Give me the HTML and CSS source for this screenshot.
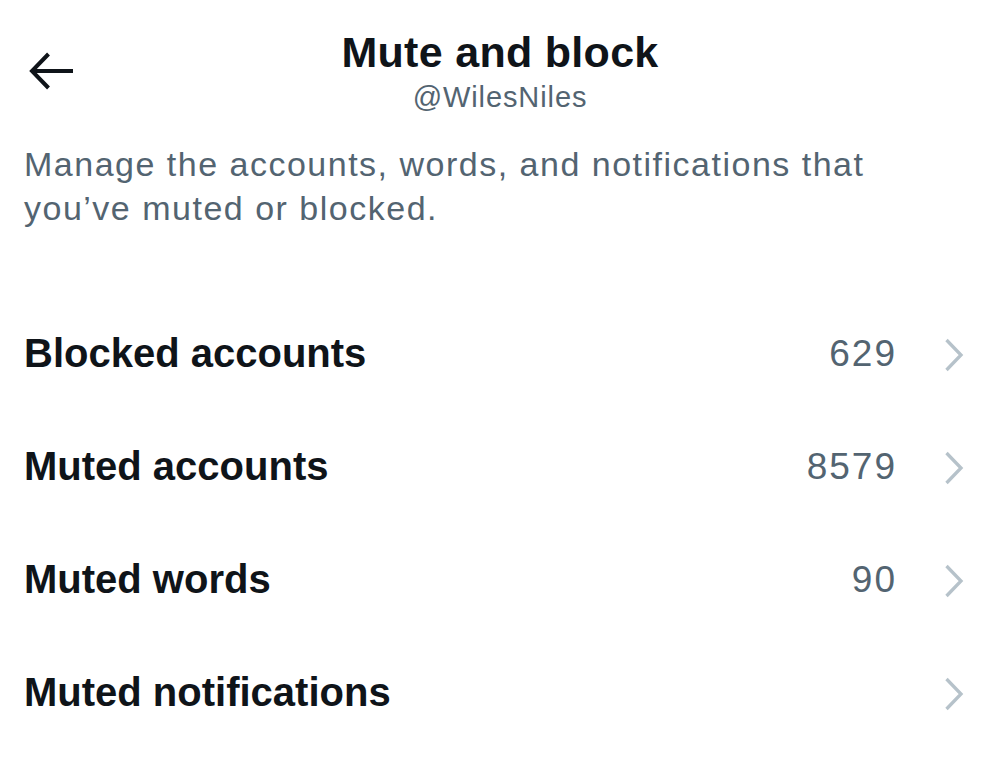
FILE: index.html
```html
<!DOCTYPE html>
<html lang="en">
<head>
<meta charset="utf-8">
<title>Mute and block</title>
<link rel="stylesheet" href="styles.css">
</head>
<body>
<div class="page">
  <header class="header">
    <div class="back">
      <svg class="back-icon" width="48" height="40" viewBox="0 0 48 40" aria-hidden="true">
        <path d="M3 20 H44 M19.5 3 L3 20 L19.5 37" fill="none" stroke="#0f1419" stroke-width="4" stroke-linecap="butt" stroke-linejoin="miter"/>
      </svg>
    </div>
    <div class="titles">
      <h1 class="title">Mute and block</h1>
      <div class="handle">@WilesNiles</div>
    </div>
    <div class="spacer"></div>
  </header>
  <p class="desc">Manage the accounts, words, and notifications that you’ve muted or blocked.</p>
  <ul class="list">
    <li class="row"><span class="label">Blocked accounts</span><span class="count">629</span><svg class="chev" width="20" height="34" viewBox="0 0 20 34"><path d="M2.5 2 L17 17 L2.5 32" fill="none" stroke="#b6c2ca" stroke-width="3.3"/></svg></li>
    <li class="row"><span class="label">Muted accounts</span><span class="count">8579</span><svg class="chev" width="20" height="34" viewBox="0 0 20 34"><path d="M2.5 2 L17 17 L2.5 32" fill="none" stroke="#b6c2ca" stroke-width="3.3"/></svg></li>
    <li class="row"><span class="label">Muted words</span><span class="count">90</span><svg class="chev" width="20" height="34" viewBox="0 0 20 34"><path d="M2.5 2 L17 17 L2.5 32" fill="none" stroke="#b6c2ca" stroke-width="3.3"/></svg></li>
    <li class="row"><span class="label">Muted notifications</span><span class="count"></span><svg class="chev" width="20" height="34" viewBox="0 0 20 34"><path d="M2.5 2 L17 17 L2.5 32" fill="none" stroke="#b6c2ca" stroke-width="3.3"/></svg></li>
  </ul>
</div>
</body>
</html>
```

FILE: styles.css
```css
html, body {
  margin: 0;
  padding: 0;
  background: #ffffff;
}
body {
  font-family: "Liberation Sans", Arial, sans-serif;
  color: #0f1419;
}
.page {
  width: 1000px;
  height: 763px;
  overflow: hidden;
}
.header {
  display: grid;
  grid-template-columns: 1fr auto 1fr;
  padding-top: 27px;
}
.back {
  padding-left: 29px;
  padding-top: 24px;
}
.back-icon {
  display: block;
}
.titles {
  display: flex;
  flex-direction: column;
  align-items: center;
}
.title {
  margin: 0;
  font-size: 43px;
  line-height: 50px;
  font-weight: 700;
  letter-spacing: 0.3px;
  color: #0f1419;
}
.handle {
  margin-top: 2px;
  font-size: 29px;
  line-height: 36px;
  letter-spacing: 0.9px;
  color: #536471;
}
.desc {
  margin: 27px 60px 0 24px;
  font-size: 34px;
  line-height: 44px;
  letter-spacing: 1.5px;
  color: #536471;
}
.list {
  list-style: none;
  margin: 67px 0 0 0;
  padding: 0;
}
.row {
  display: flex;
  align-items: center;
  height: 113px;
  padding: 0 36px 0 24px;
}
.label {
  flex: 1;
  font-size: 40px;
  font-weight: 700;
  color: #0f1419;
}
.count {
  font-size: 37px;
  letter-spacing: 2px;
  margin-right: 47px;
  color: #536471;
}
.chev {
  display: block;
  flex: none;
  margin-top: 3px;
}
```
